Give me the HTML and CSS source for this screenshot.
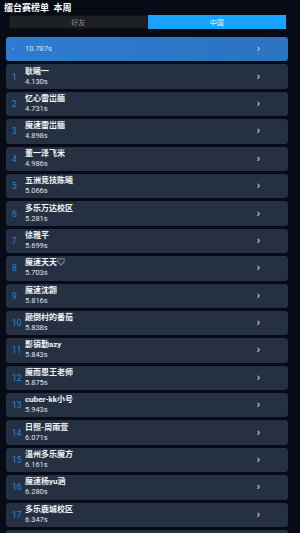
FILE: index.html
```html
<!DOCTYPE html>
<html lang="zh">
<head>
  <meta charset="UTF-8" />
  <meta name="viewport" content="width=device-width, initial-scale=1.0" />
  <title>擂台赛榜单</title>
  <link rel="stylesheet" href="styles.css">
</head>
<body>
  <div class="title">擂台赛榜单&nbsp;&nbsp;本周</div>

  <div class="tabs">
    <div class="tab">好友</div>
    <div class="tab active">中国</div>
  </div>

  <div class="list">
    <div class="row mine">
      <span class="rank"><i class="dot"></i></span>
      <div class="info"><div class="time">10.787s</div></div>
      <span class="chev">›</span>
    </div>
    <div class="row"><span class="rank">1</span><div class="info"><div class="name">耿曦一</div><div class="time">4.130s</div></div><span class="chev">›</span></div>
    <div class="row"><span class="rank">2</span><div class="info"><div class="name">忆心雷岀腼</div><div class="time">4.731s</div></div><span class="chev">›</span></div>
    <div class="row"><span class="rank">3</span><div class="info"><div class="name">魔速雷岀腼</div><div class="time">4.898s</div></div><span class="chev">›</span></div>
    <div class="row"><span class="rank">4</span><div class="info"><div class="name">董一泽飞米</div><div class="time">4.986s</div></div><span class="chev">›</span></div>
    <div class="row"><span class="rank">5</span><div class="info"><div class="name">五洲竞技陈曦</div><div class="time">5.066s</div></div><span class="chev">›</span></div>
    <div class="row"><span class="rank">6</span><div class="info"><div class="name">多乐万达校区</div><div class="time">5.281s</div></div><span class="chev">›</span></div>
    <div class="row"><span class="rank">7</span><div class="info"><div class="name">徐雅芊</div><div class="time">5.699s</div></div><span class="chev">›</span></div>
    <div class="row"><span class="rank">8</span><div class="info"><div class="name">魔速天天♡</div><div class="time">5.703s</div></div><span class="chev">›</span></div>
    <div class="row"><span class="rank">9</span><div class="info"><div class="name">魔速沈翾</div><div class="time">5.816s</div></div><span class="chev">›</span></div>
    <div class="row"><span class="rank">10</span><div class="info"><div class="name">颠倒村的番茄</div><div class="time">5.838s</div></div><span class="chev">›</span></div>
    <div class="row"><span class="rank">11</span><div class="info"><div class="name">影销勤azy</div><div class="time">5.843s</div></div><span class="chev">›</span></div>
    <div class="row"><span class="rank">12</span><div class="info"><div class="name">魔而恩王老师</div><div class="time">5.875s</div></div><span class="chev">›</span></div>
    <div class="row"><span class="rank">13</span><div class="info"><div class="name">cuber-kk小号</div><div class="time">5.943s</div></div><span class="chev">›</span></div>
    <div class="row"><span class="rank">14</span><div class="info"><div class="name">日照-周雨萱</div><div class="time">6.071s</div></div><span class="chev">›</span></div>
    <div class="row"><span class="rank">15</span><div class="info"><div class="name">温州多乐魔方</div><div class="time">6.161s</div></div><span class="chev">›</span></div>
    <div class="row"><span class="rank">16</span><div class="info"><div class="name">魔速杨yu涵</div><div class="time">6.280s</div></div><span class="chev">›</span></div>
    <div class="row"><span class="rank">17</span><div class="info"><div class="name">多乐鹿城校区</div><div class="time">6.347s</div></div><span class="chev">›</span></div>
    <div class="row"></div>
  </div>
</body>
</html>
```

FILE: styles.css
```css
html, body {
  margin: 0;
  background: #060b16;
}
body {
  font-family: Roboto, "Noto Sans CJK SC", sans-serif;
  color: #fff;
  height: 533px;
  overflow: hidden;
}
.title {
  font-size: 9px;
  font-weight: bold;
  line-height: 11px;
  padding: 3px 4px 1px;
}
.tabs {
  display: flex;
  height: 14px;
  margin: 0 14px 0 9px;
}
.tab {
  flex: 1;
  display: flex;
  align-items: center;
  justify-content: center;
  font-size: 7px;
  color: #8a8d92;
  background: #1d1f22;
  border: 1px solid #101214;
  box-sizing: border-box;
}
.tab.active {
  background: #17a3ff;
  border-color: #17a3ff;
  color: #e8f5ff;
}
.list {
  display: flex;
  flex-direction: column;
  gap: 3px;
  padding: 8px 12px 0 6px;
}
.row {
  flex: none;
  height: 24.4px;
  display: flex;
  align-items: center;
  background: #253142;
  border-radius: 3px;
  padding: 0 28px 0 6px;
}
.row.mine {
  background: linear-gradient(90deg, #2d7cd0, #2b74c0);
}
.rank {
  width: 13px;
  font-size: 8.5px;
  color: #1d8ae0;
}
.dot {
  display: block;
  width: 2px;
  height: 2px;
  border-radius: 50%;
  background: #4da0ec;
}
.info {
  flex: 1;
}
.name {
  font-size: 8px;
  font-weight: bold;
  line-height: 10px;
  color: #f4f6f8;
}
.time {
  font-size: 7.5px;
  line-height: 10px;
  color: #dfe4ea;
}
.chev {
  font-size: 11px;
  font-weight: bold;
  color: #c9d0d8;
  line-height: 10px;
}
```
